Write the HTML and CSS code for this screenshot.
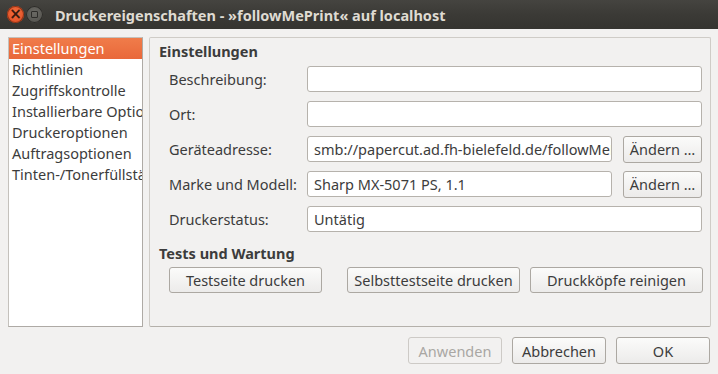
FILE: index.html
```html
<!DOCTYPE html>
<html lang="de">
<head>
    <meta charset="UTF-8">
    <title>Druckereigenschaften</title>
    <link rel="stylesheet" href="styles.css">
</head>
<body>
    <div class="window">
        <div class="titlebar">
            <span class="wbtn close">&#215;</span>
            <span class="wbtn restore"><span class="square"></span></span>
            <span class="title">Druckereigenschaften - »followMePrint« auf localhost</span>
        </div>

        <div class="content">
            <ul class="sidebar">
                <li class="selected">Einstellungen</li>
                <li>Richtlinien</li>
                <li>Zugriffskontrolle</li>
                <li>Installierbare Optionen</li>
                <li>Druckeroptionen</li>
                <li>Auftragsoptionen</li>
                <li>Tinten-/Tonerfüllstände</li>
            </ul>

            <div class="panel">
                <h2>Einstellungen</h2>
                <div class="form">
                    <label>Beschreibung:</label>
                    <div class="entry wide"></div>

                    <label>Ort:</label>
                    <div class="entry wide"></div>

                    <label>Geräteadresse:</label>
                    <div class="entry">smb://papercut.ad.fh-bielefeld.de/followMePrint</div>
                    <button class="btn small">Ändern …</button>

                    <label>Marke und Modell:</label>
                    <div class="entry">Sharp MX-5071 PS, 1.1</div>
                    <button class="btn small">Ändern …</button>

                    <label>Druckerstatus:</label>
                    <div class="entry wide">Untätig</div>
                </div>

                <h2 class="second">Tests und Wartung</h2>
                <div class="tests">
                    <button class="btn">Testseite drucken</button>
                    <button class="btn">Selbsttestseite drucken</button>
                    <button class="btn">Druckköpfe reinigen</button>
                </div>
            </div>
        </div>

        <div class="actions">
            <button class="btn disabled">Anwenden</button>
            <button class="btn">Abbrechen</button>
            <button class="btn">OK</button>
        </div>
    </div>
</body>
</html>
```

FILE: styles.css
```css
:root {
    --bg: #f2f1f0;
    --text: #3c3c3c;
    --border: #b6b2ac;
    --orange: #ef7645;
}

* {
    margin: 0;
    padding: 0;
    box-sizing: border-box;
}

body {
    width: 718px;
    height: 374px;
    overflow: hidden;
    background: var(--bg);
    color: var(--text);
    font-family: 'Noto Sans', 'Open Sans', sans-serif;
    font-size: 14.5px;
}

.window {
    height: 374px;
    display: flex;
    flex-direction: column;
}

/* Title bar */
.titlebar {
    height: 29px;
    background: linear-gradient(to bottom, #454440 0%, #3b3a36 50%, #353430 100%);
    display: flex;
    align-items: center;
    padding-left: 7px;
    flex-shrink: 0;
}

.wbtn {
    width: 17px;
    height: 17px;
    border-radius: 50%;
    display: flex;
    justify-content: center;
    align-items: center;
    margin-right: 2px;
}

.close {
    background: radial-gradient(circle at 50% 40%, #f36e3d 0%, #e4542a 70%, #b8401c 100%);
    box-shadow: inset 0 0 0 1px #8e3417;
    color: #3a1a0e;
    font-size: 15px;
    line-height: 1;
    font-weight: bold;
    font-family: 'DejaVu Sans', sans-serif;
}

.restore {
    background: radial-gradient(circle at 50% 40%, #6a6964 0%, #55544f 80%);
    box-shadow: inset 0 0 0 1px #2d2c29;
}

.square {
    width: 7px;
    height: 7px;
    border: 1.5px solid #2e2d2a;
    border-radius: 1px;
}

.title {
    margin-left: 10px;
    color: #dfdbd2;
    font-weight: bold;
    font-size: 14.5px;
    white-space: nowrap;
}

/* Main area */
.content {
    display: flex;
    gap: 6px;
    padding: 8px 8px 0 8px;
    height: 298px;
}

.sidebar {
    list-style: none;
    width: 135px;
    background: #fff;
    border: 1px solid #c4c1bc;
    border-right-color: #aeaaa5;
    border-bottom-color: #aeaaa5;
    overflow: hidden;
    flex-shrink: 0;
}

.sidebar li {
    height: 21px;
    line-height: 20px;
    padding-left: 3px;
    white-space: nowrap;
}

.sidebar li.selected {
    background: linear-gradient(to bottom, #f07c4a, #e9683a);
    color: #fff;
}

.panel {
    flex: 1;
    border: 1px solid #cfccc7;
    border-bottom-color: #b4b0aa;
    border-radius: 2px;
    padding: 3px 7px 0 9px;
}

h2 {
    font-size: 14.5px;
    font-weight: bold;
    height: 20px;
    line-height: 20px;
}

h2.second {
    margin-top: 11px;
}

.form {
    display: grid;
    grid-template-columns: 138px 305px 90px;
    grid-auto-rows: 26px;
    row-gap: 9px;
    align-items: center;
    padding-left: 10px;
    margin-top: 5px;
}

.form label {
    grid-column: 1;
}

.entry {
    height: 26px;
    background: #fff;
    border: 1px solid var(--border);
    border-radius: 3px;
    padding: 0 6px;
    line-height: 24px;
    white-space: nowrap;
    overflow: hidden;
}

.entry.wide {
    grid-column: 2 / 4;
}

.btn {
    font: inherit;
    color: var(--text);
    height: 26px;
    background: linear-gradient(to bottom, #fbfbfa, #ecebea);
    border: 1px solid #aca8a2;
    border-radius: 3px;
    white-space: nowrap;
    overflow: hidden;
}

.btn.small {
    margin-left: 11px;
    width: 79px;
    height: 27px;
    padding: 0;
}

.tests {
    display: flex;
    padding-left: 10px;
    margin-top: 4px;
}

.tests .btn {
    height: 26px;
}

.tests .btn:nth-child(1) {
    width: 153px;
    margin-right: 25px;
}

.tests .btn:nth-child(2) {
    width: 173px;
    margin-right: 10px;
}

.tests .btn:nth-child(3) {
    width: 173px;
}

/* Dialog buttons */
.actions {
    display: flex;
    justify-content: flex-end;
    gap: 10px;
    padding: 10px 8px 0 0;
}

.actions .btn {
    height: 27px;
    width: 94px;
}

.actions .btn.disabled {
    color: #a9a7a3;
    border-color: #cdcac6;
    background: #f2f1f0;
}
```
